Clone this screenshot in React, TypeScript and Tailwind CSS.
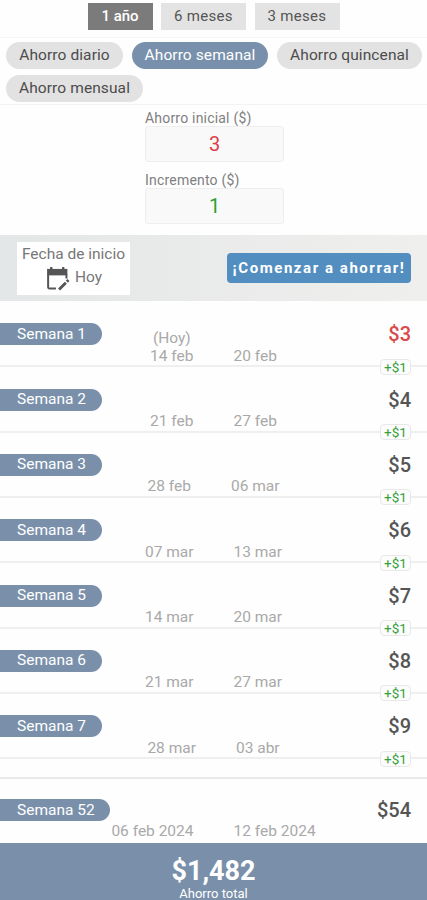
import clsx from "clsx";

const periods = [
  { label: "1 año", width: "w-[65px]" },
  { label: "6 meses", width: "w-[85px]" },
  { label: "3 meses", width: "w-[85px]" },
];

const frequencies = [
  { label: "Ahorro diario", width: "w-[117px]" },
  { label: "Ahorro semanal", width: "w-[136px]" },
  { label: "Ahorro quincenal", width: "w-[145px]" },
  { label: "Ahorro mensual", width: "w-[137px]" },
];

const weeks = [
  { week: 1, from: "14 feb", to: "20 feb", amount: "$3" },
  { week: 2, from: "21 feb", to: "27 feb", amount: "$4" },
  { week: 3, from: "28 feb", to: "06 mar", amount: "$5" },
  { week: 4, from: "07 mar", to: "13 mar", amount: "$6" },
  { week: 5, from: "14 mar", to: "20 mar", amount: "$7" },
  { week: 6, from: "21 mar", to: "27 mar", amount: "$8" },
  { week: 7, from: "28 mar", to: "03 abr", amount: "$9" },
];

type WeekProps = {
  week: number;
  from: string;
  to: string;
  amount: string;
  last?: boolean;
};

const CalendarIcon = () => (
  <svg viewBox="0 0 24 24" className="h-[25px] w-[25px]" fill="none" stroke="#555">
    <path d="M6 1v4M17.500 1v4" strokeWidth="2.200" />
    <path d="M2 2.800h19.500v6.200H2z" fill="#555" stroke="none" />
    <path d="M3 8v12.500q0 1 1 1h6.500" strokeWidth="1.900" />
    <path d="M20.600 8v4" strokeWidth="1.900" />
    <path d="M13.500 22.500l6.500-6.500M21 15l1.500-1.500" strokeWidth="2.800" />
  </svg>
);

const WeekRow = ({ week, from, to, amount, last }: WeekProps) => (
  <div
    className={clsx(
      "relative",
      last ? "h-[64px]" : "h-[65.33px] border-b-2 border-[#efefef]"
    )}
  >
    <div className={clsx("flex items-center justify-between pr-4", last ? "pt-[20px]" : "pt-[21.2px]")}>
      <div
        className={clsx(
          "flex h-[22px] items-center rounded-r-full bg-[#7a90aa] pl-[17px] text-[15.5px] text-white",
          last ? "w-[110px]" : "w-[102px]"
        )}
      >
        Semana {week}
      </div>
      <div
        className={clsx(
          "text-[20px] leading-[22px] font-medium",
          week === 1 ? "text-[#d94a4a]" : "text-[#555]"
        )}
      >
        {amount}
      </div>
    </div>
    <div
      className={clsx(
        "absolute inset-x-0 flex items-end justify-center gap-10 text-center text-[15.5px] leading-[18px] text-[#a9a9a9]",
        last ? "bottom-[3px]" : "bottom-[0.8px]"
      )}
    >
      <div>
        {week === 1 && <div>(Hoy)</div>}
        {from}
      </div>
      <div>{to}</div>
    </div>
    {!last && (
      <div className="absolute right-4 -bottom-[9.5px] z-10 flex h-[16px] w-[31px] items-center justify-center rounded-[4px] border border-[#e8e8e8] bg-[#fcfcfc] text-[13.5px] text-[#35a03a]">
        +$1
      </div>
    )}
  </div>
);

export default function App() {
  return (
    <div className="flex h-[900px] w-[427px] flex-col overflow-hidden bg-[#fefefe] font-['Roboto',sans-serif]">
      <div className="flex h-[38px] shrink-0 justify-center gap-[8.5px] border-b border-[#f5f5f5] pt-[3px]">
        {periods.map((period, i) => (
          <button
            key={period.label}
            className={clsx(
              "h-[27px] text-[15px]",
              period.width,
              i === 0
                ? "bg-[#7b7b7b] font-medium text-white"
                : "bg-[#e3e3e3] tracking-[0.3px] text-[#555]"
            )}
          >
            {period.label}
          </button>
        ))}
      </div>

      <div className="flex h-[67px] shrink-0 flex-wrap content-start gap-x-[9px] gap-y-[6px] border-b border-[#f3f3f3] pt-[4px] pl-[6px]">
        {frequencies.map((frequency, i) => (
          <button
            key={frequency.label}
            className={clsx(
              "h-[27px] rounded-full text-[15.5px] tracking-[0.1px] whitespace-nowrap",
              frequency.width,
              i === 1 ? "bg-[#7890ab] text-white" : "bg-[#e2e2e2] text-[#4c4c4c]"
            )}
          >
            {frequency.label}
          </button>
        ))}
      </div>

      <div className="flex h-[130px] shrink-0 flex-col pt-[5px] pl-[145px]">
        <div className="text-[14px] leading-[16px] tracking-[0.2px] text-[#808080]">Ahorro inicial ($)</div>
        <div className="flex h-[36px] w-[139px] items-center justify-center rounded-[3px] border border-[#eee] bg-[#f9f9f9] text-[20px] text-[#dc3f47]">
          3
        </div>
        <div className="mt-[10px] text-[14px] leading-[16px] tracking-[0.2px] text-[#808080]">Incremento ($)</div>
        <div className="flex h-[36px] w-[139px] items-center justify-center rounded-[3px] border border-[#eee] bg-[#f9f9f9] text-[20px] text-[#2ca034]">
          1
        </div>
      </div>

      <div className="flex h-[66px] shrink-0 items-center justify-between bg-linear-to-r from-[#e4e7e7] to-[#efefed] pr-4 pl-[17px]">
        <div className="h-[53px] w-[113px] bg-white pt-[2px] text-center text-[15.5px] text-[#777]">
          <div className="leading-[20px]">Fecha de inicio</div>
          <div className="flex items-center justify-center gap-[5px] pt-[2px]">
            <CalendarIcon />
            <span>Hoy</span>
          </div>
        </div>
        <button className="h-[30px] w-[184px] rounded-[4px] bg-[#528ebf] text-[15px] font-bold tracking-[1.55px] whitespace-nowrap text-white">
          ¡Comenzar a ahorrar!
        </button>
      </div>

      <div className="shrink-0 pt-[1px]">
        {weeks.map((week) => (
          <WeekRow key={week.week} {...week} />
        ))}
      </div>
      <div className="mt-[18px] shrink-0 border-t-2 border-[#e9e9e9]">
        <WeekRow week={52} from="06 feb 2024" to="12 feb 2024" amount="$54" last />
      </div>

      <div className="flex grow flex-col items-center bg-[#7a90aa] pt-[12px] text-white">
        <div className="text-[27px] leading-[32px] font-bold">$1,482</div>
        <div className="text-[13px] leading-[13px]">Ahorro total</div>
      </div>
    </div>
  );
}
